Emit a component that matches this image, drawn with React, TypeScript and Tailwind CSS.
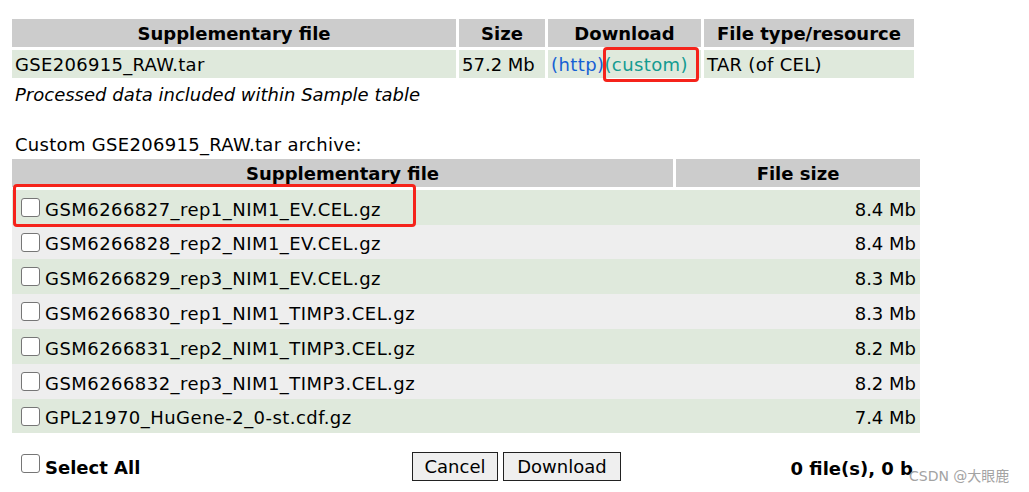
import React from "react";

// files in the custom archive
const files = [
  { name: "GSM6266827_rep1_NIM1_EV.CEL.gz", size: "8.4 Mb", row: "h-[35px] bg-[#dfe9dc]" },
  { name: "GSM6266828_rep2_NIM1_EV.CEL.gz", size: "8.4 Mb", row: "h-[34px] bg-[#eeeeee]" },
  { name: "GSM6266829_rep3_NIM1_EV.CEL.gz", size: "8.3 Mb", row: "h-[35px] bg-[#dfe9dc]" },
  { name: "GSM6266830_rep1_NIM1_TIMP3.CEL.gz", size: "8.3 Mb", row: "h-[35px] bg-[#eeeeee]" },
  { name: "GSM6266831_rep2_NIM1_TIMP3.CEL.gz", size: "8.2 Mb", row: "h-[35px] bg-[#dfe9dc]" },
  { name: "GSM6266832_rep3_NIM1_TIMP3.CEL.gz", size: "8.2 Mb", row: "h-[35px] bg-[#eeeeee]" },
  { name: "GPL21970_HuGene-2_0-st.cdf.gz", size: "7.4 Mb", row: "h-[34px] bg-[#dfe9dc]" },
];

const Checkbox = ({ className = "" }: { className?: string }) => (
  <span className={`inline-block h-[19px] w-[19px] shrink-0 rounded-[3px] border border-[#767676] bg-white ${className}`} />
);

const App = () => {
  return (
    <div className="relative h-[492px] w-[1029px] overflow-hidden bg-white font-['DejaVu_Sans','Noto_Sans_CJK_SC',sans-serif] text-[18px] leading-[21px] text-black">
      {/* Supplementary file table */}
      <div className="pl-[12px] pt-[19px]">
        <div className="grid grid-cols-[444px_86px_153px_210px] gap-[3px]">
          <div className="flex h-[28px] items-center justify-center bg-[#cccccc] font-bold">Supplementary file</div>
          <div className="flex h-[28px] items-center justify-center bg-[#cccccc] font-bold">Size</div>
          <div className="flex h-[28px] items-center justify-center bg-[#cccccc] font-bold">Download</div>
          <div className="flex h-[28px] items-center justify-center bg-[#cccccc] font-bold">File type/resource</div>
          <div className="flex h-[28px] items-center bg-[#dfe9dc] px-[3px] tracking-[0.3px]">GSE206915_RAW.tar</div>
          <div className="flex h-[28px] items-center bg-[#dfe9dc] px-[3px]">57.2 Mb</div>
          <div className="flex h-[28px] items-center bg-[#dfe9dc] px-[3px] tracking-[0.4px]">
            <span className="text-[#1560d4]">(http)</span>
            <span className="text-[#149b91]">(custom)</span>
          </div>
          <div className="flex h-[28px] items-center bg-[#dfe9dc] px-[3px] tracking-[0.3px]">TAR (of CEL)</div>
        </div>
      </div>

      <p className="pl-[15px] pt-[6px] italic">Processed data included within Sample table</p>
      <p className="pl-[15px] pt-[29px] tracking-[0.3px]">Custom GSE206915_RAW.tar archive:</p>

      {/* Custom archive table */}
      <div className="pl-[12px] pt-[4px]">
        <div className="w-[908px]">
          <div className="grid grid-cols-[661px_244px] gap-[3px]">
            <div className="flex h-[28px] items-center justify-center bg-[#cccccc] font-bold">Supplementary file</div>
            <div className="flex h-[28px] items-center justify-center bg-[#cccccc] font-bold">File size</div>
          </div>
          <div className="mt-[3px] flex flex-col">
            {files.map((f, i) => (
              <div key={i} className={`flex items-center justify-between pl-[9px] pr-[4px] ${f.row}`}>
                <div className="flex items-center gap-[5px]">
                  <Checkbox />
                  <span className="pt-[3px] tracking-[0.45px]">{f.name}</span>
                </div>
                <span className="pt-[3px]">{f.size}</span>
              </div>
            ))}
          </div>
        </div>
      </div>

      {/* Bottom controls */}
      <div className="mt-[19px] flex h-[29px] w-[913px] items-center">
        <div className="flex w-[412px] items-center gap-[5px] pl-[21px] pt-[2px]">
          <Checkbox className="mb-[8px]" />
          <span className="font-bold">Select All</span>
        </div>
        <div className="flex items-center gap-[5px]">
          <button className="flex h-[29px] w-[86px] items-center justify-center border border-[#222222] bg-[#efefef]">Cancel</button>
          <button className="flex h-[29px] w-[118px] items-center justify-center border border-[#222222] bg-[#efefef]">Download</button>
        </div>
        <span className="ml-auto pt-[3px] font-bold">0 file(s), 0 b</span>
      </div>

      {/* red highlight marks */}
      <div className="absolute left-[603px] top-[47px] h-[35px] w-[96px] rounded-[4px] border-[3px] border-[#f5231b]" />
      <div className="absolute left-[13px] top-[184px] h-[43px] w-[403px] rounded-[4px] border-[3px] border-[#f5231b]" />

      {/* watermark */}
      <div className="absolute left-[909px] top-[467px] text-[14px] leading-[18px] text-[#a3a3a3]">CSDN @大眼鹿</div>
    </div>
  );
};

export default App;
